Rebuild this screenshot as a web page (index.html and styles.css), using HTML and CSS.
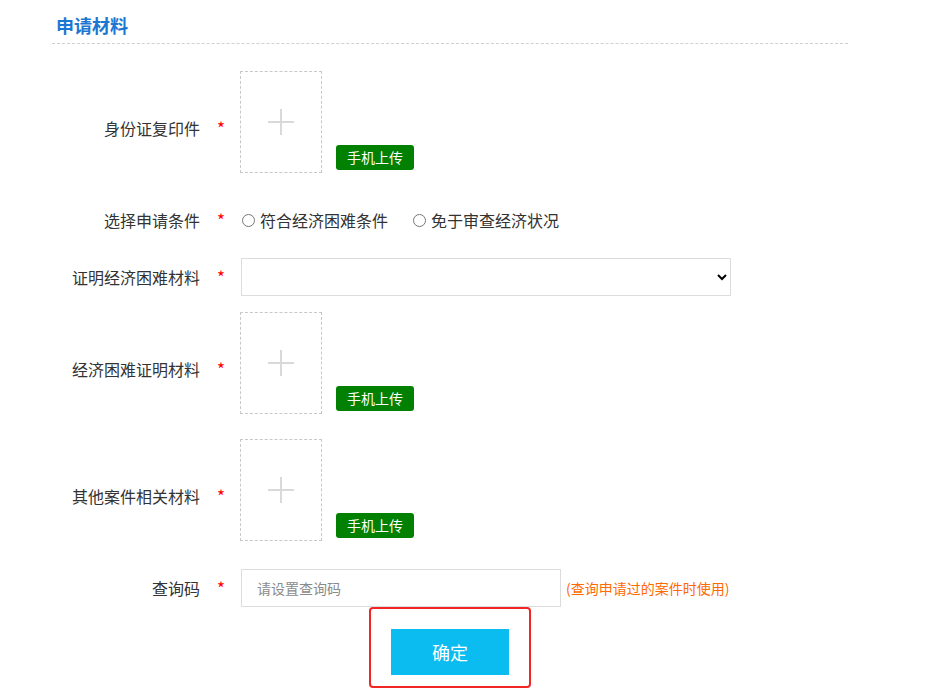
FILE: index.html
```html
<!DOCTYPE html>
<html lang="zh-CN">
<head>
    <meta charset="UTF-8">
    <meta name="viewport" content="width=device-width, initial-scale=1.0">
    <title>申请材料</title>
    <link rel="stylesheet" href="styles.css">
</head>
<body>
    <div class="panel">
        <h2 class="panel-title">申请材料</h2>
        <form class="apply-form">
            <div class="form-row row-upload">
                <label class="form-label">身份证复印件</label>
                <span class="required">*</span>
                <div class="upload-field">
                    <div class="upload-box">
                        <svg width="26" height="26" viewBox="0 0 26 26"><path d="M13 0V26M0 13H26" stroke="#d9d9d9" stroke-width="2" fill="none"/></svg>
                    </div>
                    <button type="button" class="btn-mobile">手机上传</button>
                </div>
            </div>

            <div class="form-row row-choice">
                <label class="form-label">选择申请条件</label>
                <span class="required">*</span>
                <div class="choice-field">
                    <label class="choice"><input type="radio" name="condition">符合经济困难条件</label>
                    <label class="choice"><input type="radio" name="condition">免于审查经济状况</label>
                </div>
            </div>

            <div class="form-row">
                <label class="form-label">证明经济困难材料</label>
                <span class="required">*</span>
                <select class="form-select">
                    <option></option>
                </select>
            </div>

            <div class="form-row row-upload row-tight">
                <label class="form-label">经济困难证明材料</label>
                <span class="required">*</span>
                <div class="upload-field">
                    <div class="upload-box">
                        <svg width="26" height="26" viewBox="0 0 26 26"><path d="M13 0V26M0 13H26" stroke="#d9d9d9" stroke-width="2" fill="none"/></svg>
                    </div>
                    <button type="button" class="btn-mobile">手机上传</button>
                </div>
            </div>

            <div class="form-row row-upload">
                <label class="form-label">其他案件相关材料</label>
                <span class="required">*</span>
                <div class="upload-field">
                    <div class="upload-box">
                        <svg width="26" height="26" viewBox="0 0 26 26"><path d="M13 0V26M0 13H26" stroke="#d9d9d9" stroke-width="2" fill="none"/></svg>
                    </div>
                    <button type="button" class="btn-mobile">手机上传</button>
                </div>
            </div>

            <div class="form-row row-last">
                <label class="form-label">查询码</label>
                <span class="required">*</span>
                <input type="text" class="form-input" placeholder="请设置查询码">
                <span class="hint">(查询申请过的案件时使用)</span>
            </div>

            <div class="confirm-wrap">
                <div class="confirm-frame">
                    <button type="button" class="btn-confirm">确定</button>
                </div>
            </div>
        </form>
    </div>
</body>
</html>
```

FILE: styles.css
```css
body {
    margin: 0;
    padding: 0;
    background: white;
    color: #333;
    font-family: "Noto Sans CJK SC", "Microsoft YaHei", sans-serif;
}
.panel {
    margin-left: 52px;
    width: 796px;
}
.panel-title {
    margin: 0;
    padding: 12px 0 5px 4px;
    font-size: 18px;
    line-height: 26px;
    font-weight: bold;
    color: #1c77d2;
    border-bottom: 1px dashed #d0d0d0;
}
.apply-form {
    padding-top: 27px;
}
.form-row {
    display: flex;
    align-items: center;
    margin-bottom: 16px;
}
.row-choice {
    height: 38px;
    margin-bottom: 19px;
}
.row-tight {
    margin-bottom: 13px;
}
.row-last {
    margin-bottom: 0;
}
.form-label {
    width: 148px;
    text-align: right;
    font-size: 16px;
    line-height: 22px;
    color: #333;
}
.required {
    width: 40px;
    box-sizing: border-box;
    padding-left: 17px;
    color: #f00;
    font-size: 17px;
    line-height: 22px;
}
.upload-field {
    display: flex;
    align-items: flex-end;
    padding-bottom: 12px;
}
.upload-box {
    width: 82px;
    height: 102px;
    box-sizing: border-box;
    border: 1px dashed #c8c8c8;
    display: flex;
    align-items: center;
    justify-content: center;
}
.btn-mobile {
    margin: 0 0 3px 14px;
    width: 78px;
    height: 25px;
    padding: 0;
    border: none;
    border-radius: 3px;
    background: #028002;
    color: white;
    font-family: inherit;
    font-size: 14px;
    line-height: 25px;
    cursor: pointer;
}
.choice-field {
    display: flex;
    align-items: center;
}
.choice {
    display: flex;
    align-items: center;
    font-size: 16px;
    line-height: 22px;
    color: #333;
    margin-right: 23px;
}
.choice input {
    margin: 0 5px 0 2px;
    width: 13px;
    height: 13px;
}
.form-select {
    margin-left: 1px;
    width: 490px;
    height: 38px;
    border: 1px solid #dcdcdc;
    border-radius: 0;
    background: white;
    font-family: inherit;
    font-size: 14px;
}
.form-input {
    margin: 0 0 0 1px;
    width: 320px;
    height: 38px;
    box-sizing: border-box;
    border: 1px solid #dcdcdc;
    padding: 0 15px;
    font-family: inherit;
    font-size: 14px;
    color: #333;
}
.form-input::placeholder {
    color: #8a8a8a;
}
.hint {
    margin-left: 5px;
    color: #ff6a00;
    font-size: 14px;
}
.confirm-wrap {
    display: flex;
    justify-content: center;
}
.confirm-frame {
    border: 2px solid #f32626;
    border-radius: 4px;
    padding: 20px 20px 11px 20px;
}
.btn-confirm {
    display: block;
    width: 118px;
    height: 46px;
    border: none;
    background: #0bbcf1;
    color: white;
    font-family: inherit;
    font-size: 18px;
    cursor: pointer;
}
```
